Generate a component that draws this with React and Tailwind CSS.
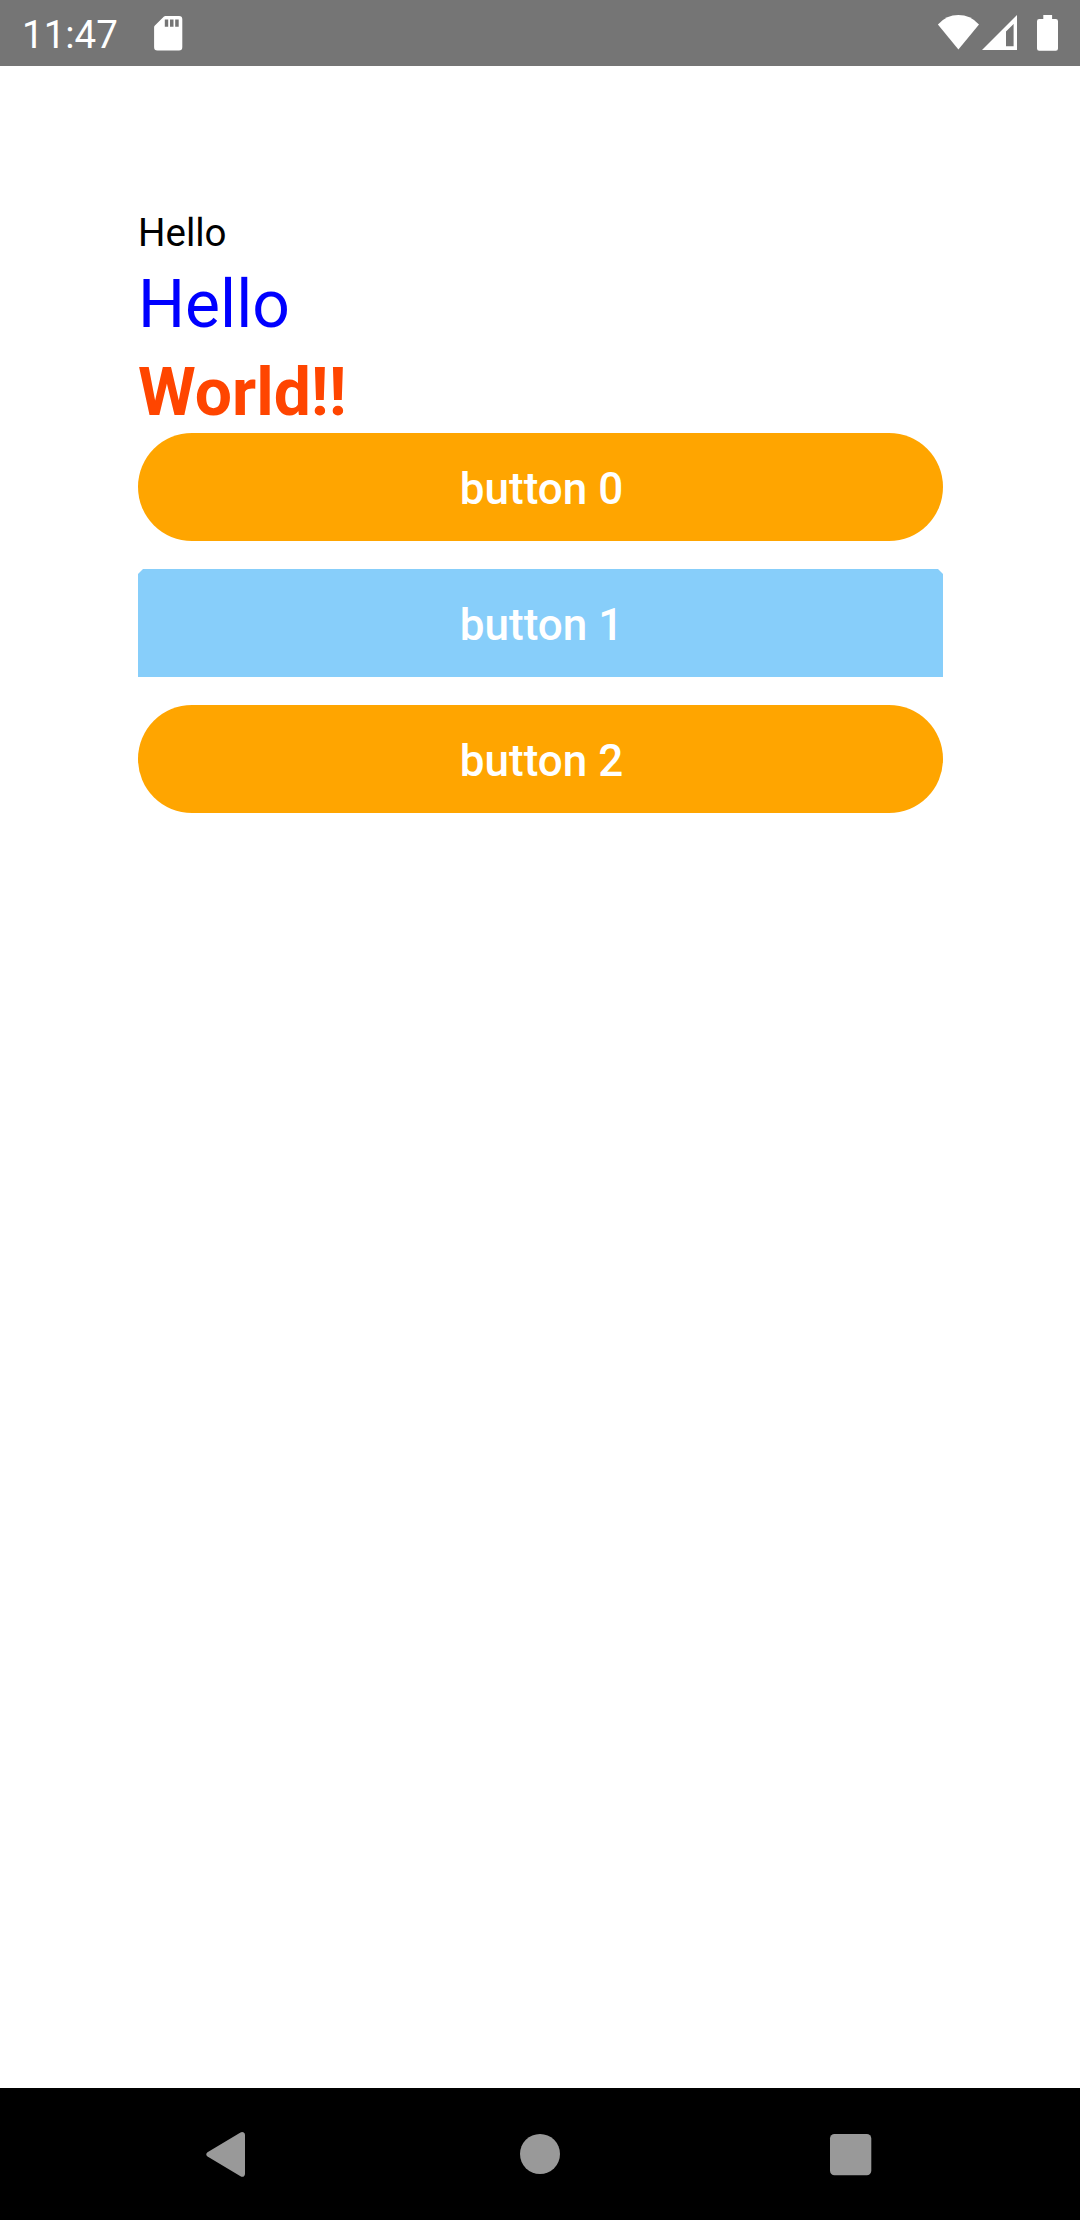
function StatusBar() {
  return (
    <header className="flex h-[66px] items-start bg-[#757575] text-white">
      <span className="ml-[22px] mt-[9px] w-[98px] whitespace-nowrap text-[38.5px] leading-[52px]">11:47</span>
      <svg className="ml-[32px] h-[66px] w-8" viewBox="152 0 32 66" fill="currentColor">
        <path
          fillRule="evenodd"
          d="M165.5 16H179q3.3 0 3.3 3.3V47.3q0 3.3-3.3 3.3H157.4q-3.3 0-3.3-3.3V27.3q0-1 .8-1.8L163.7 16.8q.8-.8 1.8-.8ZM164.8 19.5v7.2h3.4v-7.2ZM170 19.5v7.2h3.5v-7.2ZM175.2 19.5v7.2h3.5v-7.2Z"
        />
      </svg>
      <svg className="ml-auto h-[66px] w-[160px]" viewBox="920 0 160 66" fill="currentColor">
        <path d="M958.4 49.6L937.9 24.5Q946.5 15.1 958.4 15.1T979 24.5Z" />
        <path fillRule="evenodd" d="M982 50L1017 15V50ZM1006 31.5V46.2H1013.6V23.9Z" />
        <path d="M1043.3 15h8.8v4h3.7q2.2 0 2.2 2.2v27.3q0 2.2-2.2 2.2h-16.6q-2.2 0-2.2-2.2V21.2q0-2.2 2.2-2.2h4.1Z" />
      </svg>
    </header>
  );
}

function PillButton({ children }) {
  return (
    <button className="flex h-[108px] w-full items-center justify-center rounded-full bg-[#ffa500] pl-0.5 pt-1 text-[44px] font-medium leading-[52px] text-white">
      {children}
    </button>
  );
}

function NavigationBar() {
  return (
    <nav className="flex h-[132px] items-center bg-black text-[#999999]">
      <svg className="ml-[204px] h-[132px] w-[44px]" viewBox="204 2088 44 132" fill="currentColor">
        <path d="M207.5 2152.2L240.5 2132.5Q242.3 2131.7 243.8 2132.6Q245 2133.5 245 2135V2174Q245 2175.5 243.8 2176.4Q242.3 2177.3 240.5 2176.2L207.5 2156.6Q205 2154.4 207.5 2152.2Z" />
      </svg>
      <svg className="ml-[270px] h-[132px] w-[44px]" viewBox="518 2088 44 132" fill="currentColor">
        <circle cx="540" cy="2154" r="20" />
      </svg>
      <svg className="ml-[266px] h-[132px] w-[44px]" viewBox="828 2088 44 132" fill="currentColor">
        <rect x="830" y="2134" width="41.3" height="41.3" rx="4.5" />
      </svg>
    </nav>
  );
}

export default function App() {
  return (
    <div className="flex h-[2220px] w-[1080px] flex-col bg-white font-['Roboto',sans-serif]">
      <StatusBar />
      <main className="flex-1 pl-[138px] pr-[137px] pt-[141px]">
        <p className="text-[38.5px] leading-[52px] text-black">Hello</p>
        <p className="mt-0.5 text-[66px] leading-[88px] text-[#0000ff]">Hello</p>
        <p className="h-[84px] text-[66px] font-bold leading-[88px] text-[#ff4500]">World!!</p>
        <div className="flex flex-col gap-7">
          <PillButton>button 0</PillButton>
          <button className="flex h-[108px] w-full items-center justify-center bg-[#87cefa] pl-0.5 pt-1 text-[44px] font-medium leading-[52px] text-white [clip-path:polygon(0_5px,5px_0,calc(100%-5px)_0,100%_5px,100%_100%,0_100%)]">
            button 1
          </button>
          <PillButton>button 2</PillButton>
        </div>
      </main>
      <NavigationBar />
    </div>
  );
}
